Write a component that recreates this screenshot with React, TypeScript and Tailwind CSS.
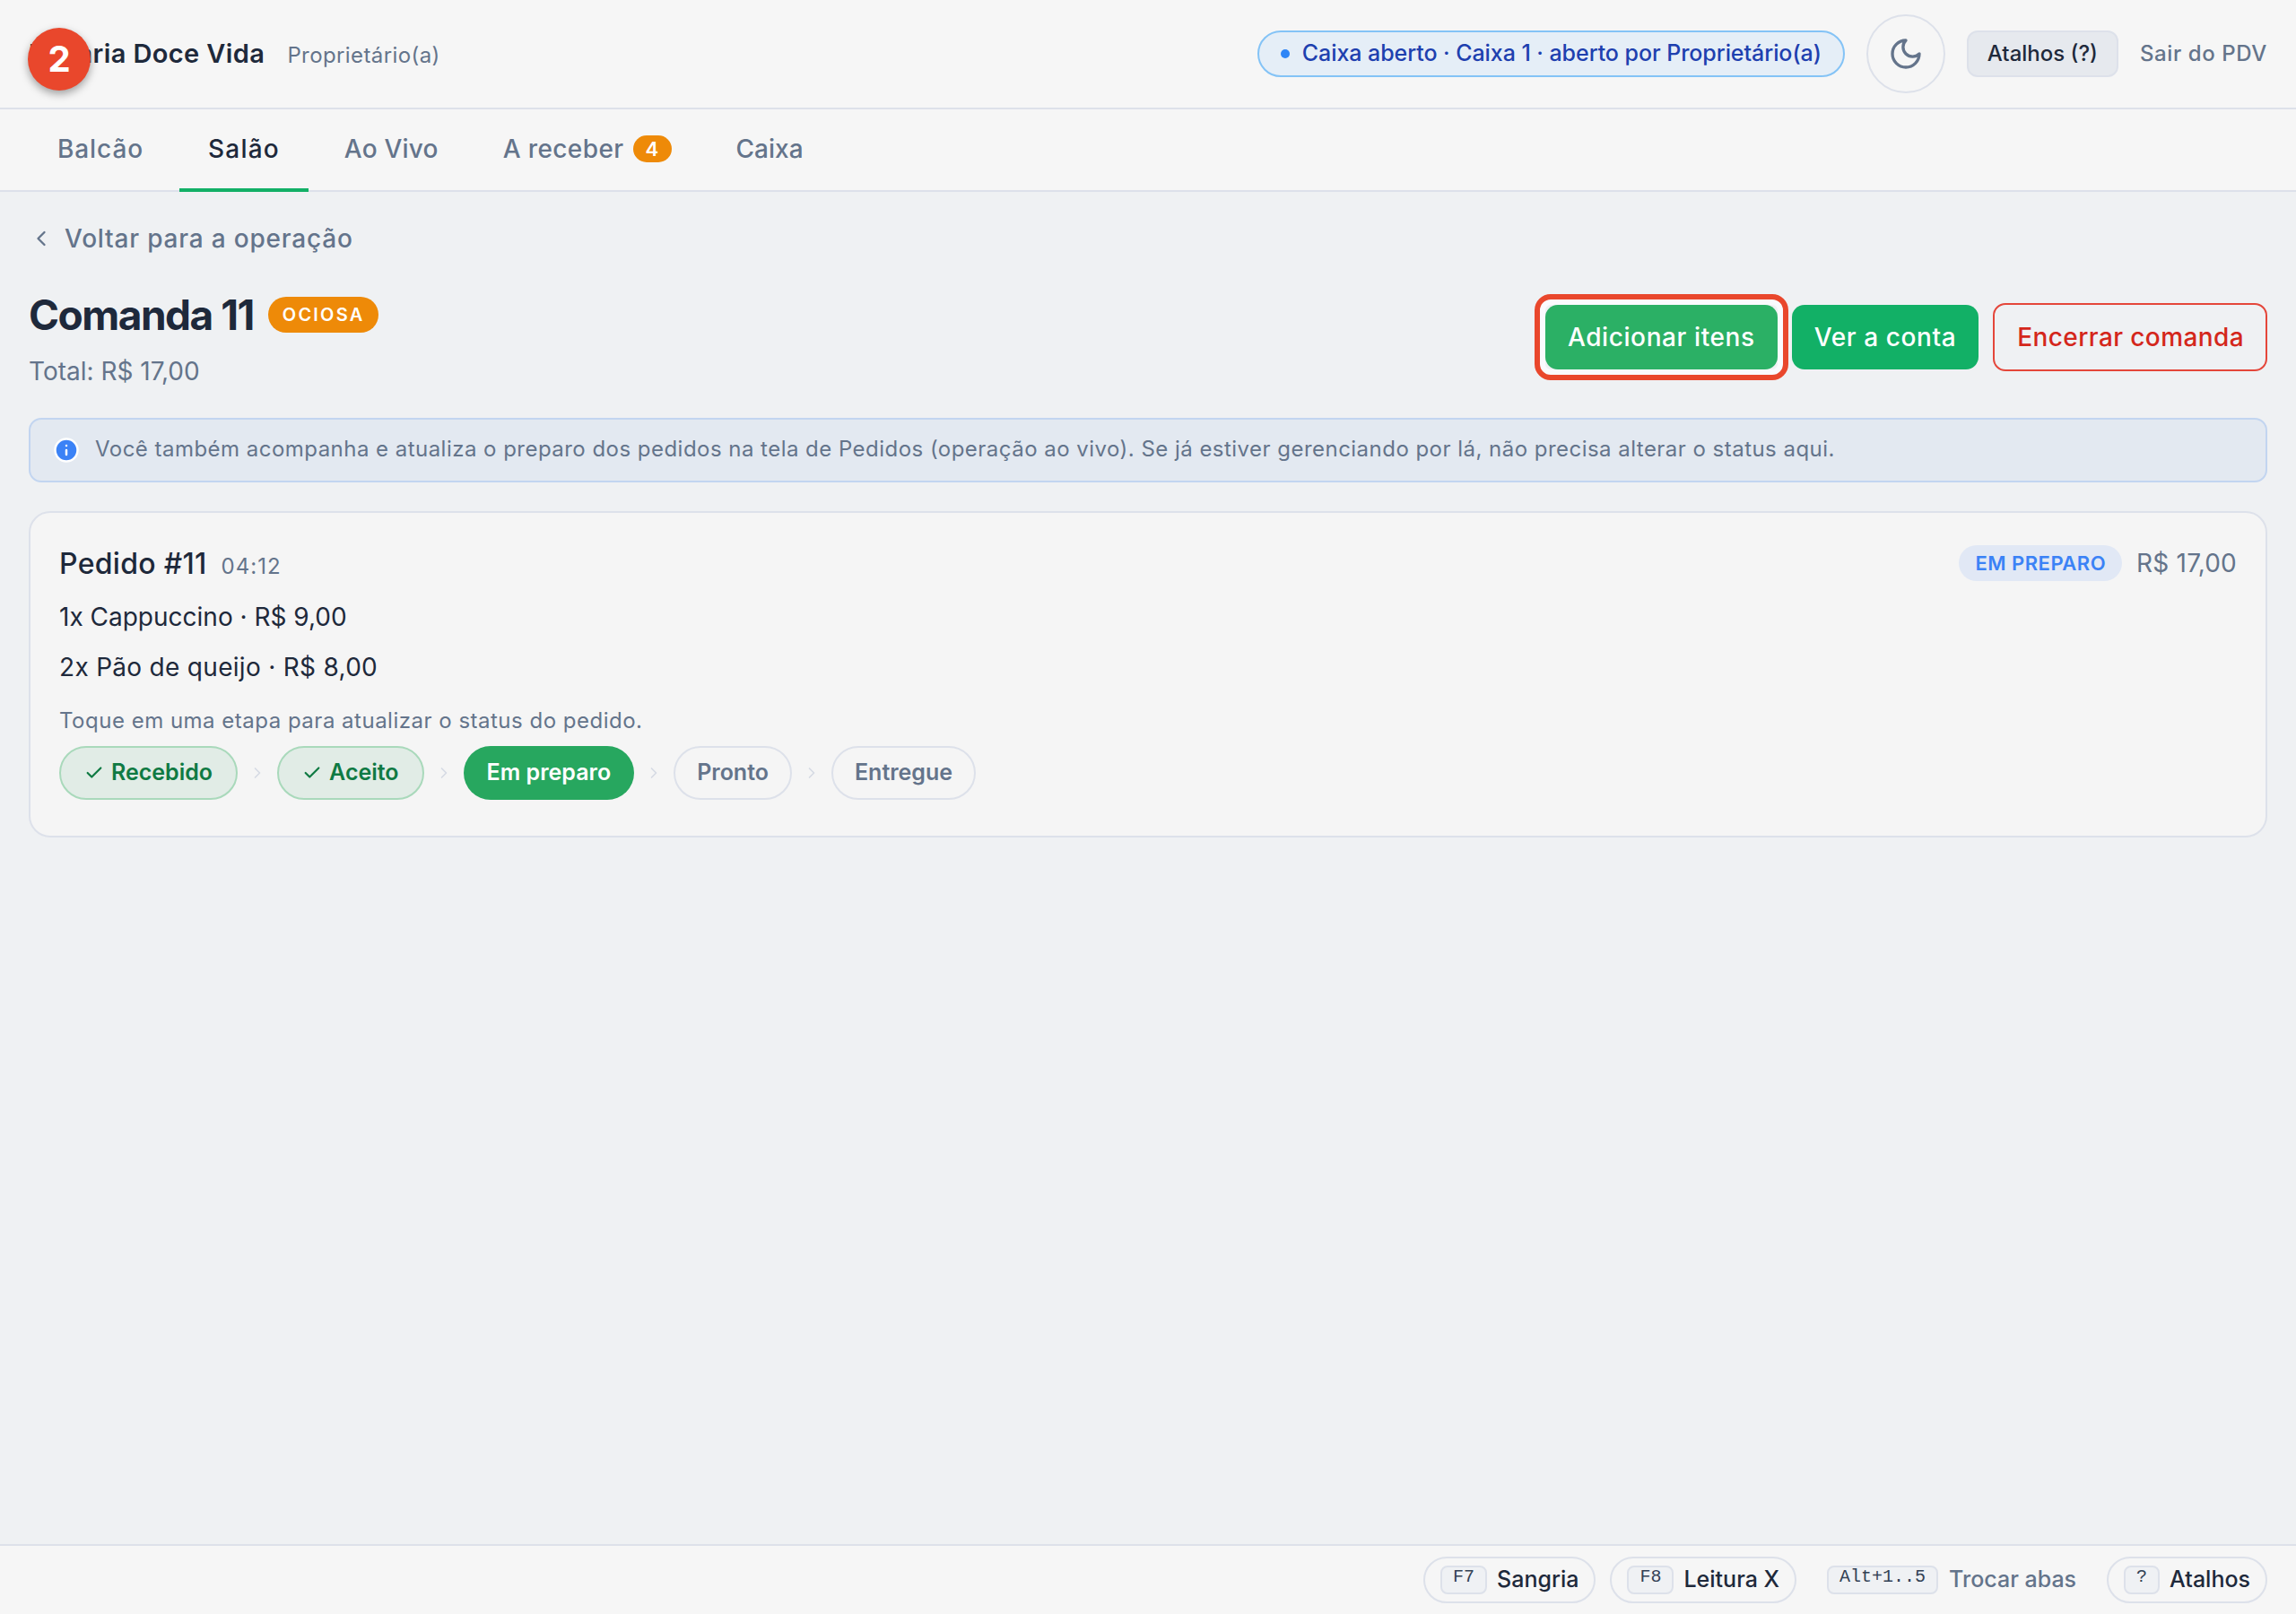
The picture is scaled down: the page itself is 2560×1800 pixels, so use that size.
import { Check, ChevronLeft, ChevronRight, Info } from "lucide-react";

const inter = "font-['Inter','Liberation_Sans',sans-serif]";

function StepDone({ label }: { label: string }) {
  return (
    <button className="h-[60px] px-[26px] flex items-center gap-[8px] rounded-full border-2 border-[#a9d9bb] bg-[#e1ece6] text-[#0f7a43] text-[25px] font-semibold">
      <Check className="w-[22px] h-[22px]" strokeWidth={2.4} />
      {label}
    </button>
  );
}

function StepTodo({ label }: { label: string }) {
  return (
    <button className="h-[60px] px-[24px] flex items-center rounded-full border-2 border-[#dde1ea] text-[#64748b] text-[25px] font-semibold">
      {label}
    </button>
  );
}

function Arrow() {
  return <ChevronRight className="w-[20px] h-[20px] mx-[2px] text-[#d5dae3]" strokeWidth={2} />;
}

function Kbd({ children }: { children: string }) {
  return (
    <span className="h-[32px] px-[12px] pb-[6px] flex items-center rounded-[8px] border-2 border-[#dde1ea] bg-[#eff1f4] font-['Liberation_Mono',monospace] text-[20px] text-[#334155]">
      {children}
    </span>
  );
}

export default function App() {
  return (
    <div className={`${inter} h-screen flex flex-col bg-[#eff1f3] text-[#1e293b]`}>
      <header className="relative h-[122px] shrink-0 flex items-center justify-between px-[32px] bg-[#f6f6f6] border-b-2 border-[#dde1ea]">
        <div className="flex items-baseline gap-[25px]">
          <span className="text-[29px] font-semibold tracking-[0.4px]">Padaria Doce Vida</span>
          <span className="text-[24px] tracking-[0.4px] text-[#64748b]">Proprietário(a)</span>
        </div>
        <div className="flex items-center">
          <div className="h-[52px] px-[24px] flex items-center gap-[14px] rounded-full border-2 border-[#84c3f6] bg-[#e5eef7] text-[#1e40af] text-[25px] font-medium tracking-[-0.06px]">
            <span className="w-[10px] h-[10px] rounded-full bg-[#2f86f6]" />
            Caixa aberto · Caixa 1 · aberto por Proprietário(a)
          </div>
          <button className="ml-[24px] w-[88px] h-[88px] flex items-center justify-center rounded-full border-2 border-[#dde1ea]">
            <svg viewBox="0 0 24 24" className="w-[40px] h-[40px] text-[#64748b]" fill="none" stroke="currentColor" strokeWidth="2" strokeLinecap="round" strokeLinejoin="round">
              <path d="M12 3a6 6 0 0 0 9 9 9 9 0 1 1-9-9Z" />
            </svg>
          </button>
          <button className="ml-[24px] h-[52px] px-[21px] rounded-[12px] border-2 border-[#dde1ea] bg-[#e6e9ee] text-[24px] font-medium">
            Atalhos (?)
          </button>
          <span className="ml-[24px] text-[24px] font-medium tracking-[0.6px] text-[#64748b]">Sair do PDV</span>
        </div>
        <span className="absolute left-[31px] top-[31px] w-[70px] h-[70px] flex items-center justify-center rounded-full bg-[#e9472c] text-white text-[40px] font-bold shadow-[0_4px_10px_rgba(0,0,0,0.35)]">
          2
        </span>
      </header>

      <nav className="h-[92px] shrink-0 flex items-stretch gap-[8px] px-[32px] pb-[2px] bg-[#f6f6f6] border-b-2 border-[#dde1ea] text-[28px] font-medium text-[#64748b]">
        <a className="px-[32px] flex items-center tracking-[0.9px]">Balcão</a>
        <a className="px-[32px] flex items-center tracking-[1.2px] text-[#1e293b] border-b-4 border-[#12b066] -mb-[4px]">Salão</a>
        <a className="px-[32px] flex items-center tracking-[0.2px]">Ao Vivo</a>
        <a className="px-[32px] flex items-center gap-[10px] tracking-[0.4px]">
          A receber
          <span className="h-[30px] px-[14px] flex items-center rounded-full bg-[#ee8a08] text-white text-[22px] font-semibold">4</span>
        </a>
        <a className="px-[32px] flex items-center">Caixa</a>
      </nav>

      <main className="flex-1 px-[32px] pt-[32px]">
        <a className="flex items-center gap-[12px] h-[40px] text-[28px] font-medium tracking-[0.8px] text-[#64748b]">
          <ChevronLeft className="w-[28px] h-[28px]" strokeWidth={2} />
          Voltar para a operação
        </a>

        <div className="mt-[37px] flex items-start justify-between">
          <div>
            <div className="flex items-center gap-[16px]">
              <h1 className="text-[46px] leading-[56px] font-bold tracking-[-1.5px]">Comanda 11</h1>
              <span className="h-[40px] px-[16px] flex items-center rounded-full bg-[#ee8a08] text-white text-[20px] font-semibold tracking-[2.2px]">OCIOSA</span>
            </div>
            <p className="mt-[14px] text-[28px] text-[#64748b]">Total: R$ 17,00</p>
          </div>
          <div className="mt-[15px] flex items-center gap-[16px]">
            <div className="relative">
              <button className="h-[72px] px-[25px] rounded-[14px] bg-[#2bb065] text-white text-[28px] font-medium tracking-[0.6px]">Adicionar itens</button>
              <span className="absolute -inset-[12px] rounded-[18px] border-[6px] border-[#e9472c] shadow-[inset_0_0_0_6px_#fafafd] pointer-events-none" />
            </div>
            <button className="h-[72px] px-[25px] rounded-[14px] bg-[#12b066] text-white text-[28px] font-medium tracking-[0.6px]">Ver a conta</button>
            <button className="h-[76px] pl-[25px] pr-[24px] rounded-[14px] border-2 border-[#e4463a] text-[#d4271b] text-[28px] font-medium tracking-[0.4px]">Encerrar comanda</button>
          </div>
        </div>

        <div className="mt-[31px] h-[72px] px-[25px] pb-[2px] flex items-center gap-[17px] rounded-[14px] border-2 border-[#c2d5f0] bg-[#e3e9f1] text-[24px] tracking-[0.47px] text-[#64748b]">
          <Info className="w-[30px] h-[30px] mt-[2px] fill-[#3b82f6] text-white" strokeWidth={2} />
          Você também acompanha e atualiza o preparo dos pedidos na tela de Pedidos (operação ao vivo). Se já estiver gerenciando por lá, não precisa alterar o status aqui.
        </div>

        <section className="mt-[32px] h-[364px] px-[32px] pt-[33px] rounded-[24px] border-2 border-[#dde1ea] bg-[#f5f5f5]">
          <div className="flex items-start justify-between">
            <div className="flex items-baseline gap-[16px]">
              <span className="text-[32px] font-medium tracking-[0.3px]">Pedido #11</span>
              <span className="text-[24px] tracking-[1px] text-[#64748b]">04:12</span>
            </div>
            <div className="flex items-center gap-[16px] mt-[2px]">
              <span className="h-[40px] px-[18px] flex items-center rounded-full bg-[#e1e8f5] text-[#3b82f6] text-[22px] font-semibold tracking-[0.5px]">EM PREPARO</span>
              <span className="text-[28px] tracking-[0.2px] text-[#64748b]">R$ 17,00</span>
            </div>
          </div>
          <p className="mt-[14px] text-[28px] leading-[42px]">1x Cappuccino · R$ 9,00</p>
          <p className="mt-[14px] text-[28px] leading-[42px] tracking-[0.3px]">2x Pão de queijo · R$ 8,00</p>
          <p className="mt-[22px] text-[24px] leading-[34px] tracking-[0.5px] text-[#64748b]">Toque em uma etapa para atualizar o status do pedido.</p>
          <div className="mt-[11px] flex items-center gap-[10px]">
            <StepDone label="Recebido" />
            <Arrow />
            <StepDone label="Aceito" />
            <Arrow />
            <button className="h-[60px] px-[26px] rounded-full bg-[#27a75f] text-white text-[25px] font-semibold">Em preparo</button>
            <Arrow />
            <StepTodo label="Pronto" />
            <Arrow />
            <StepTodo label="Entregue" />
          </div>
        </section>
      </main>

      <footer className="h-[78px] shrink-0 flex items-center justify-end gap-[16px] px-[32px] bg-[#f6f6f6] border-t-2 border-[#dde1ea] text-[25px] font-medium">
        <div className="h-[52px] px-[17px] flex items-center gap-[11px] rounded-full border-2 border-[#dde1ea]">
          <Kbd>F7</Kbd>
          Sangria
        </div>
        <div className="h-[52px] px-[17px] flex items-center gap-[11px] rounded-full border-2 border-[#dde1ea]">
          <Kbd>F8</Kbd>
          Leitura X
        </div>
        <div className="h-[52px] px-[18px] flex items-center gap-[12px] text-[#64748b]">
          <Kbd>Alt+1..5</Kbd>
          Trocar abas
        </div>
        <div className="h-[52px] px-[17px] flex items-center gap-[11px] rounded-full border-2 border-[#dde1ea]">
          <Kbd>?</Kbd>
          Atalhos
        </div>
      </footer>
    </div>
  );
}
